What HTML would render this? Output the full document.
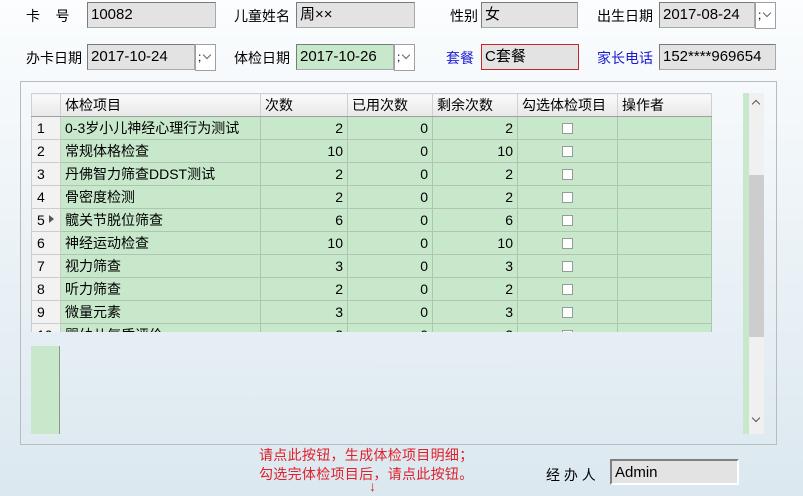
<!DOCTYPE html>
<html><head><meta charset="utf-8"><style>
*{margin:0;padding:0;box-sizing:border-box}
body{width:803px;height:496px;overflow:hidden;position:relative;font-family:"Liberation Sans","Microsoft YaHei","Noto Sans CJK SC",sans-serif;font-size:14px;color:#000;background:linear-gradient(180deg,#fbfdfe 0%,#eef4f8 40%,#dbe8ef 100%)}
.a{position:absolute;white-space:nowrap}
.lbl{position:absolute;font-size:14px;line-height:20px}
.in{position:absolute;height:26px;background:#e3e3e3;border:1px solid #a9a9a9;border-top-color:#7a7a7a;border-left-color:#7a7a7a;font-size:15px;line-height:23px;padding-left:3px}
.btn{position:absolute;width:21px;height:27px;background:#fff;border:1px solid #a0a0a0;font-size:11px;color:#555}
.btn i{position:absolute;left:2px;top:5px;font-style:normal;font-size:12px;color:#000}
.btn b{position:absolute;left:8px;top:7px;width:6px;height:6px;border-right:1px solid #666;border-bottom:1px solid #666;transform:rotate(45deg)}
.panel{position:absolute;left:20px;top:81px;width:757px;height:364px;border:1px solid #b8bcc0}
table{border-collapse:collapse;table-layout:fixed;width:680px;position:absolute;left:31px;top:93px;font-size:14px}
td{height:23px;border:1px solid #b0c4b0;background:#c8e8cc;padding:0 4px;line-height:21px;overflow:hidden;white-space:nowrap}
tr.h td{background:linear-gradient(#fafafa,#e8e8e8);border:1px solid #d0d0d0;border-bottom-color:#a0a0a0}
td.n{background:#f2f2f2;border-color:#ccc;padding:0 0 0 5px;position:relative}
td.r{text-align:right}
.cb{display:inline-block;width:11px;height:11px;background:#fff;border:1px solid #9a9a9a;vertical-align:middle}
</style></head><body>
<div class="lbl" style="left:26px;top:6px">卡&nbsp;&nbsp;&nbsp;&nbsp;号</div>
<div class="in" style="left:87px;top:2px;width:129px">10082</div>
<div class="lbl" style="left:234px;top:6px">儿童姓名</div>
<div class="in" style="left:296px;top:2px;width:119px">周××</div>
<div class="lbl" style="left:450px;top:6px">性别</div>
<div class="in" style="left:481px;top:2px;width:97px">女</div>
<div class="lbl" style="left:597px;top:6px">出生日期</div>
<div class="in" style="left:659px;top:2px;width:96px">2017-08-24</div>
<div class="btn" style="left:755px;top:2px"><i>;</i><b></b></div>

<div class="lbl" style="left:26px;top:48px">办卡日期</div>
<div class="in" style="left:87px;top:44px;width:108px">2017-10-24</div>
<div class="btn" style="left:195px;top:44px"><i>;</i><b></b></div>
<div class="lbl" style="left:234px;top:48px">体检日期</div>
<div class="in" style="left:296px;top:44px;width:98px;background:#c8e8cc">2017-10-26</div>
<div class="btn" style="left:394px;top:44px"><i>;</i><b></b></div>
<div class="lbl" style="left:446px;top:48px;color:#1a1ad0">套餐</div>
<div class="in" style="left:481px;top:44px;width:98px;border:1px solid #c8262a">C套餐</div>
<div class="lbl" style="left:597px;top:48px;color:#1a1ad0">家长电话</div>
<div class="in" style="left:659px;top:44px;width:117px">152****969654</div>

<div class="panel"></div>
<div style="position:absolute;left:31px;top:93px;width:681px;height:239px;overflow:hidden">
<table style="left:0;top:0">
<colgroup><col style="width:29px"><col style="width:200px"><col style="width:87px"><col style="width:85px"><col style="width:85px"><col style="width:100px"><col style="width:94px"></colgroup>
<tr class="h"><td></td><td>体检项目</td><td>次数</td><td>已用次数</td><td>剩余次数</td><td>勾选体检项目</td><td>操作者</td></tr>
<tr><td class="n">1</td><td>0-3岁小儿神经心理行为测试</td><td class="r">2</td><td class="r">0</td><td class="r">2</td><td style="text-align:center"><span class="cb"></span></td><td></td></tr>
<tr><td class="n">2</td><td>常规体格检查</td><td class="r">10</td><td class="r">0</td><td class="r">10</td><td style="text-align:center"><span class="cb"></span></td><td></td></tr>
<tr><td class="n">3</td><td>丹佛智力筛查DDST测试</td><td class="r">2</td><td class="r">0</td><td class="r">2</td><td style="text-align:center"><span class="cb"></span></td><td></td></tr>
<tr><td class="n">4</td><td>骨密度检测</td><td class="r">2</td><td class="r">0</td><td class="r">2</td><td style="text-align:center"><span class="cb"></span></td><td></td></tr>
<tr><td class="n">5<span style="position:absolute;left:17px;top:6px;width:0;height:0;border-left:5px solid #555;border-top:4px solid transparent;border-bottom:4px solid transparent"></span></td><td>髋关节脱位筛查</td><td class="r">6</td><td class="r">0</td><td class="r">6</td><td style="text-align:center"><span class="cb"></span></td><td></td></tr>
<tr><td class="n">6</td><td>神经运动检查</td><td class="r">10</td><td class="r">0</td><td class="r">10</td><td style="text-align:center"><span class="cb"></span></td><td></td></tr>
<tr><td class="n">7</td><td>视力筛查</td><td class="r">3</td><td class="r">0</td><td class="r">3</td><td style="text-align:center"><span class="cb"></span></td><td></td></tr>
<tr><td class="n">8</td><td>听力筛查</td><td class="r">2</td><td class="r">0</td><td class="r">2</td><td style="text-align:center"><span class="cb"></span></td><td></td></tr>
<tr><td class="n">9</td><td>微量元素</td><td class="r">3</td><td class="r">0</td><td class="r">3</td><td style="text-align:center"><span class="cb"></span></td><td></td></tr>
<tr><td class="n">10</td><td>婴幼儿气质评价</td><td class="r">2</td><td class="r">0</td><td class="r">2</td><td style="text-align:center"><span class="cb"></span></td><td></td></tr>
</table></div>
<div class="a" style="left:31px;top:346px;width:29px;height:88px;background:#c8e8cc;border-right:1px solid #8a9a8a"></div>
<div class="a" style="left:743px;top:93px;width:6px;height:341px;background:#c8e8cc"></div>
<div class="a" style="left:749px;top:93px;width:15px;height:341px;background:#f0f0f0"></div>
<div class="a" style="left:749px;top:175px;width:15px;height:162px;background:#cdcdcd"></div>
<div class="a" style="left:753px;top:101px;width:6px;height:6px;border-left:1.5px solid #555;border-top:1.5px solid #555;transform:rotate(45deg)"></div>
<div class="a" style="left:753px;top:415px;width:6px;height:6px;border-right:1.5px solid #555;border-bottom:1.5px solid #555;transform:rotate(45deg)"></div>

<div class="a" style="left:259px;top:446px;color:#e0202a;font-size:14px;line-height:19px;letter-spacing:0.3px">请点此按钮，生成体检项目明细；<br>勾选完体检项目后，请点此按钮。</div>
<div class="a" style="left:369px;top:478px;color:#e0202a;font-size:14px">↓</div>
<div class="lbl" style="left:546px;top:465px">经&nbsp;办&nbsp;人</div>
<div class="in" style="left:610px;top:459px;width:129px;border:2px solid #fff;border-top-color:#808080;border-left-color:#808080">Admin</div>
</body></html>
